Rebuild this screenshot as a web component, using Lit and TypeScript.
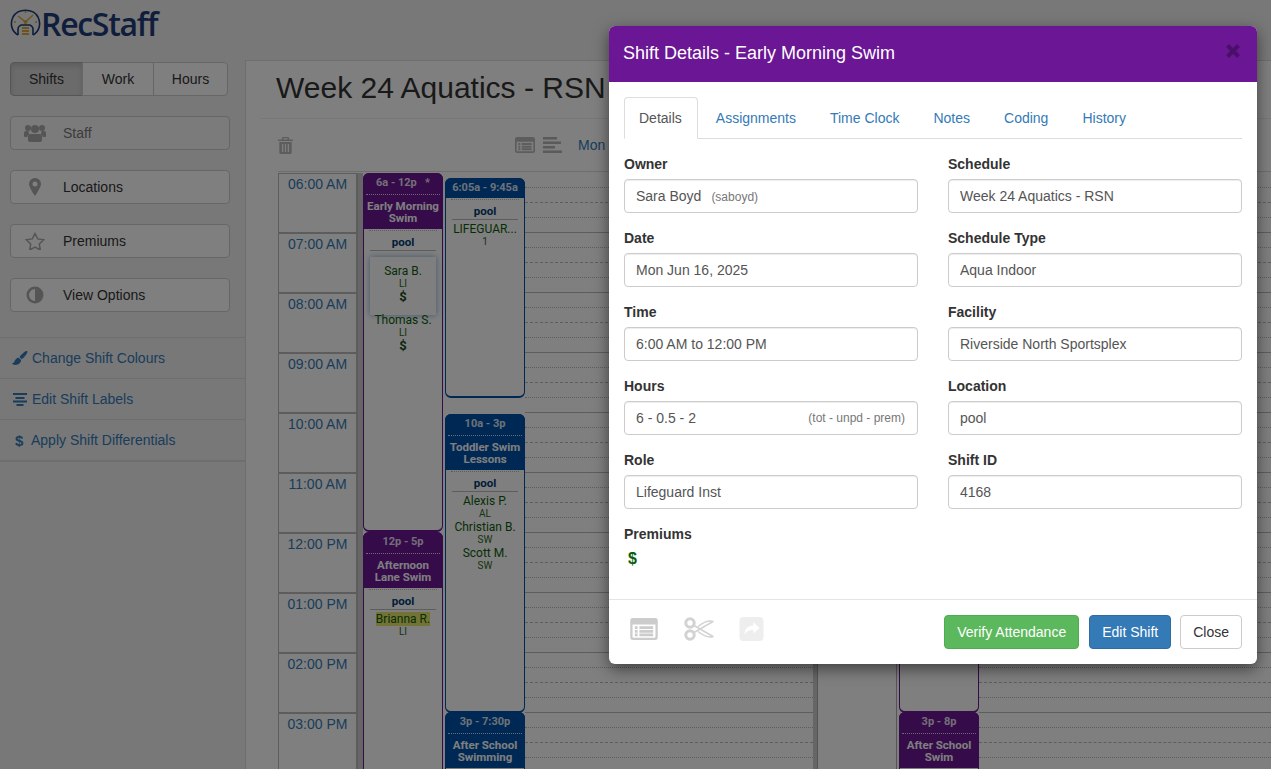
import { LitElement, html, svg, css } from 'lit';
import { customElement } from 'lit/decorators.js';

const PURPLE = '#6a1695';
const NAVY = '#0050a8';

interface Person {
  name: string;
  role: string;
  premium?: boolean;
  selected?: boolean;
  flagged?: boolean;
}

interface Shift {
  top: number;
  left: number;
  height: number;
  color: string;
  time: string;
  title?: string;
  star?: boolean;
  location?: string;
  people?: Person[];
}

const laneOne: Shift[] = [
  {
    top: 0, left: 0, height: 359, color: PURPLE, time: '6a - 12p', star: true, title: 'Early Morning Swim', location: 'pool',
    people: [
      { name: 'Sara B.', role: 'LI', premium: true, selected: true },
      { name: 'Thomas S.', role: 'LI', premium: true },
    ],
  },
  {
    top: 5, left: 82, height: 220, color: NAVY, time: '6:05a - 9:45a', location: 'pool',
    people: [{ name: 'LIFEGUAR...', role: '1' }],
  },
  {
    top: 241, left: 82, height: 299, color: NAVY, time: '10a - 3p', title: 'Toddler Swim Lessons', location: 'pool',
    people: [
      { name: 'Alexis P.', role: 'AL' },
      { name: 'Christian B.', role: 'SW' },
      { name: 'Scott M.', role: 'SW' },
    ],
  },
  {
    top: 359, left: 0, height: 300, color: PURPLE, time: '12p - 5p', title: 'Afternoon Lane Swim', location: 'pool',
    people: [{ name: 'Brianna R.', role: 'LI', flagged: true }],
  },
  { top: 539, left: 82, height: 120, color: NAVY, time: '3p - 7:30p', title: 'After School Swimming' },
];

const laneTwo: Shift[] = [
  { top: 240, left: 2, height: 300, color: PURPLE, time: '10a - 3p' },
  { top: 539, left: 2, height: 120, color: PURPLE, time: '3p - 8p', title: 'After School Swim' },
];

const hours = ['06:00 AM', '07:00 AM', '08:00 AM', '09:00 AM', '10:00 AM', '11:00 AM', '12:00 PM', '01:00 PM', '02:00 PM', '03:00 PM'];

const listAlt = svg`<path fill="currentColor" fill-rule="evenodd" d="M3 0h24a3 3 0 0 1 3 3v18a3 3 0 0 1-3 3H3a3 3 0 0 1-3-3V3a3 3 0 0 1 3-3zM2.500 7v13.500a1 1 0 0 0 1 1h23a1 1 0 0 0 1-1V7zM5 9h3v3H5zM10 9h15v3H10zM5 13h3v3H5zM10 13h15v3H10zM5 17h3v3H5zM10 17h15v3H10z"/>`;

@customElement('app-root')
export class AppRoot extends LitElement {
  static styles = css`
    :host {
      display: block;
      position: relative;
      height: 769px;
      overflow: hidden;
      background: #f1f1f1;
      font-family: 'Liberation Sans', Arial, sans-serif;
      font-size: 14px;
      color: #333;
    }

    a { color: #337ab7; text-decoration: none; }

    .logo {
      display: flex;
      align-items: center;
      height: 60px;
      padding: 0 0 14px 10px;
      box-sizing: border-box;
    }
    .logo svg { width: 31px; height: 30px; }
    .logo span {
      font-family: 'Open Sans', sans-serif;
      font-weight: 600;
      font-size: 32px;
      letter-spacing: -1.3px;
      color: #1f3d78;
    }

    .page { display: flex; height: 709px; }

    /* left column */
    .sidebar { width: 245px; flex: none; padding-top: 2px; box-sizing: border-box; }
    .seg { display: flex; width: 218px; margin-left: 10px; height: 34px; }
    .seg div {
      display: flex;
      align-items: center;
      justify-content: center;
      border: 1px solid #ccc;
      margin-left: -1px;
      background: #fff;
      box-sizing: border-box;
    }
    .seg .on { background: #d6d6d6; border-color: #adadad; box-shadow: inset 0 3px 5px rgba(0, 0, 0, 0.125); border-radius: 4px 0 0 4px; margin-left: 0; width: 73px; }
    .seg .work { width: 72px; }
    .seg .hrs { width: 75px; border-radius: 0 4px 4px 0; }

    .tools { display: flex; flex-direction: column; gap: 20px; margin: 20px 0 25px 10px; }
    .tool {
      display: flex;
      align-items: center;
      width: 220px;
      height: 34px;
      box-sizing: border-box;
      background: #fff;
      border: 1px solid #ccc;
      border-radius: 4px;
    }
    .tool.off { color: #777; background: #f7f7f7; }
    .tool svg { width: 22px; height: 18px; margin-left: 13px; margin-right: 17px; color: #aaa; }

    .links { border-top: 1px solid #ddd; border-bottom: 1px solid #ddd; }
    .links a {
      display: flex;
      align-items: center;
      height: 40px;
      padding-left: 12px;
      border-bottom: 1px solid #ddd;
    }
    .links svg { width: 16px; height: 14px; margin-right: 4px; }
    .links .usd { width: 15px; margin-left: 3px; font-weight: 700; font-size: 15px; margin-right: 1px; }

    /* main panel */
    .main {
      flex: 1;
      min-width: 0;
      background: #fff;
      border-top: 1px solid #ddd;
      border-left: 1px solid #ddd;
    }
    .title {
      margin: 0 0 0 15px;
      padding: 8px 0 11px 15px;
      height: 38px;
      border-bottom: 1px solid #eee;
      font-size: 30px;
      font-weight: 400;
      line-height: 38px;
      color: #333;
    }
    .bar {
      display: flex;
      align-items: center;
      height: 52px;
      margin-left: 32px;
      border-bottom: 1px solid #ddd;
      color: #bbb;
    }
    .bar .trash { width: 15px; height: 17px; }
    .bar .la { width: 20px; height: 16px; margin-left: 222px; color: #bbb; }
    .bar .tasks { width: 19px; height: 16px; margin-left: 8px; color: #b4b4b4; }
    .bar a { margin-left: 16px; }

    .cal { display: flex; margin: 1px 0 0 32px; }
    .times { width: 80px; flex: none; border-left: 1px solid #bbb; box-sizing: border-box; }
    .time {
      height: 60px;
      box-sizing: border-box;
      border: 1px solid #bbb;
      border-width: 1px 2px 1px 0;
      text-align: center;
      line-height: 20px;
      color: #337ab7;
    }
    .band { flex: none; width: 5px; background: #ccc; }
    .band.thin { width: 4px; }
    .lane { position: relative; flex: none; width: 162px; }
    .lane.two { width: 82px; }
    .blank { width: 80px; flex: none; box-sizing: border-box; border-left: 1px solid #aaa; border-right: 1px solid #aaa; }
    .lines { flex: none; width: 288px; }
    .lines.rest { flex: 1; width: auto; }
    .hour { height: 60px; box-sizing: border-box; }
    .hour i { display: block; height: 15px; box-sizing: border-box; border-bottom: 1px dotted #bbb; }
    .hour i:nth-child(2) { border-bottom-style: dashed; }
    .hour i:nth-child(4) { border-bottom: 1px solid #bbb; }

    .shift {
      position: absolute;
      width: 80px;
      box-sizing: border-box;
      background: #fff;
      border: 1px solid;
      border-bottom-width: 2px;
      border-radius: 6px;
      font-family: Roboto, 'Liberation Sans', sans-serif;
      font-size: 12px;
      text-align: center;
    }
    .head {
      margin: -1px -1px 0;
      border-radius: 6px 6px 0 0;
      color: #fff;
      font-size: 11.5px;
      font-weight: 700;
      line-height: 12px;
    }
    .head .when {
      height: 20px;
      line-height: 20px;
      margin: 0 3px;
      font-size: 11px;
      opacity: 0.85;
    }
    .head .what {
      margin: 1px 3px 0;
      border-top: 1px dotted rgba(255, 255, 255, 0.8);
      padding: 5px 0 5px;
    }
    .loc {
      margin: 1px 5px 0;
      border-top: 1px dotted #bbb;
      padding-top: 4px;
    }
    .loc b {
      display: block;
      font-size: 11.5px;
      line-height: 14px;
      padding-bottom: 1px;
      border-bottom: 1px solid #bbb;
      margin: 0 1px;
      color: #003a70;
    }
    .person { margin-top: 3px; line-height: 13px; color: #0b5d0b; }
    .person + .person { margin-top: 1px; }
    .person small { display: block; font-size: 10px; line-height: 12px; color: #2c6b1a; }
    .person .usd { display: block; font-size: 13px; line-height: 14px; color: #1a4a1a; font-weight: 700; }
    .person.sel {
      margin: 6px 6px 0;
      padding: 8px 0 11px;
      background: #fff;
      box-shadow: 0 0 6px rgba(51, 122, 183, 0.6);
    }
    .person.sel + .person { margin-top: -1px; }
    .person mark { background: #e6e66a; color: inherit; }

    /* dimmer and dialog */
    .dim { position: absolute; inset: 0; background: rgba(0, 0, 0, 0.5); }
    .modal {
      position: absolute;
      left: 609px;
      top: 26px;
      width: 648px;
      height: 638px;
      background: #fff;
      border-radius: 6px;
      box-shadow: 0 5px 15px rgba(0, 0, 0, 0.5);
    }
    .m-head {
      display: flex;
      align-items: center;
      justify-content: space-between;
      height: 56px;
      padding: 0 15px 2px 14px;
      box-sizing: border-box;
      background: #6a1695;
      border-radius: 6px 6px 0 0;
      color: #fff;
      font-size: 18px;
      font-weight: 500;
    }
    .m-head svg { width: 16px; height: 16px; color: rgba(0, 0, 0, 0.3); margin-right: 1px; margin-bottom: 4px; }

    .m-body { padding: 15px 15px 0; height: 517px; box-sizing: border-box; }
    .tabs { display: flex; height: 42px; border-bottom: 1px solid #ddd; box-sizing: border-box; margin-bottom: 15px; }
    .tabs a {
      height: 42px;
      box-sizing: border-box;
      padding: 10px 15px;
      line-height: 20px;
      border: 1px solid transparent;
      margin-right: 2px;
    }
    .tabs a.on {
      color: #555;
      border-color: #ddd #ddd #fff;
      border-radius: 4px 4px 0 0;
      background: #fff;
      padding-left: 14px;
    }

    .grid { display: grid; grid-template-columns: 294px 294px; column-gap: 30px; }
    .field { height: 74px; }
    .field label { display: block; height: 20px; line-height: 20px; font-weight: 700; margin-bottom: 5px; }
    .input {
      display: flex;
      align-items: center;
      justify-content: space-between;
      height: 34px;
      box-sizing: border-box;
      padding: 0 12px 0 11px;
      border: 1px solid #ccc;
      border-radius: 4px;
      color: #555;
      box-shadow: inset 0 1px 1px rgba(0, 0, 0, 0.075);
    }
    .input small { font-size: 12px; color: #777; }
    .input .user { margin-left: 10px; }
    .prem { color: #0b5d0b; font-weight: 700; font-size: 16px; margin: 5px 0 0 4px; line-height: 20px; }

    .m-foot {
      display: flex;
      align-items: center;
      height: 65px;
      padding: 0 15px 0 21px;
      box-sizing: border-box;
      border-top: 1px solid #e5e5e5;
    }
    .m-foot svg { color: #ccc; margin-bottom: 6px; }
    .m-foot .la { width: 28px; height: 22px; }
    .m-foot .cut { width: 30px; height: 24px; margin-left: 26px; color: #d2d2d2; }
    .m-foot .fwd { width: 25px; height: 24px; margin-left: 25px; color: #eee; }
    .btns { display: flex; margin-left: auto; }
    .btn {
      height: 34px;
      box-sizing: border-box;
      padding: 0 12px;
      line-height: 32px;
      border: 1px solid #ccc;
      border-radius: 4px;
      background: #fff;
      margin-left: 9px;
    }
    .btn.green { background: #5cb85c; border-color: #4cae4c; color: #fff; margin-left: 0; }
    .btn.blue { background: #337ab7; border-color: #2e6da4; color: #fff; margin-left: 10px; }
  `;

  private renderPerson(p: Person) {
    return html`
      <div class="person ${p.selected ? 'sel' : ''}">
        ${p.flagged ? html`<mark>${p.name}</mark>` : p.name}
        <small>${p.role}</small>
        ${p.premium ? html`<span class="usd">$</span>` : ''}
      </div>
    `;
  }

  private renderShift(s: Shift) {
    return html`
      <div class="shift" style="top:${s.top}px;left:${s.left}px;height:${s.height}px;border-color:${s.color}">
        <div class="head" style="background:${s.color}">
          <div class="when">${s.time}${s.star ? html`&nbsp;&nbsp;&nbsp;*` : ''}</div>
          ${s.title ? html`<div class="what">${s.title}</div>` : ''}
        </div>
        ${s.location
          ? html`<div class="loc"><b>${s.location}</b></div>`
          : ''}
        ${(s.people ?? []).map((p) => this.renderPerson(p))}
      </div>
    `;
  }

  private renderLines(rest = false) {
    return html`
      <div class="lines ${rest ? 'rest' : ''}">
        ${hours.map(() => html`<div class="hour"><i></i><i></i><i></i><i></i></div>`)}
      </div>
    `;
  }

  private renderField(label: string, value: unknown) {
    return html`
      <div class="field">
        <label>${label}</label>
        <div class="input">${value}</div>
      </div>
    `;
  }

  render() {
    return html`
      <div class="logo">
        <svg viewBox="0 0 31 30">
          <path d="M8 27 C1 23 0 15 3 9 C8 0 23 0 28 9 C31 15 30 23 23 27" fill="none" stroke="#1f3d78" stroke-width="1.600"/>
          <path d="M8 27 V21 C8 19 10 17 12 17 H19 C21 17 23 19 23 21 V27" fill="none" stroke="#1f3d78" stroke-width="1.600"/>
          <path d="M8 8 L15.500 14 L23 7 M15.500 3 V5 M4 14 H6 M25 14 H27" fill="none" stroke="#d9a93a" stroke-width="1.600"/>
          <circle cx="15.500" cy="14" r="2" fill="#d9a93a"/>
          <path d="M12 19 H19 V21 H12z M12 22 H19 V24 H12z M12 25 H19 V27 H12z" fill="#d9a93a"/>
        </svg>
        <span>RecStaff</span>
      </div>
      <div class="page">
        <div class="sidebar">
          <div class="seg">
            <div class="on">Shifts</div>
            <div class="work">Work</div>
            <div class="hrs">Hours</div>
          </div>
          <div class="tools">
            <div class="tool off">
              <svg viewBox="0 0 22 18"><g fill="currentColor"><circle cx="4" cy="4" r="3"/><circle cx="18" cy="4" r="3"/><circle cx="11" cy="5" r="4"/><path d="M0 9a2 2 0 0 1 2-2h2.500a5 5 0 0 0 1 3.500C4 11 3.500 12 3.500 13H1a1 1 0 0 1-1-1zM22 9a2 2 0 0 0-2-2h-2.500a5 5 0 0 1-1 3.500c1.500.5 2 1.500 2 2.500H21a1 1 0 0 0 1-1z"/><path d="M7 10h8a3 3 0 0 1 3 3v3a2 2 0 0 1-2 2H6a2 2 0 0 1-2-2v-3a3 3 0 0 1 3-3z"/></g></svg>
              Staff
            </div>
            <div class="tool">
              <svg viewBox="0 0 22 18"><path fill="currentColor" fill-rule="evenodd" d="M11 0a6 6 0 0 0-6 6c0 3.500 6 12 6 12s6-8.500 6-12a6 6 0 0 0-6-6zm0 3.500a2.500 2.500 0 1 1 0 5 2.500 2.500 0 0 1 0-5z"/></svg>
              Locations
            </div>
            <div class="tool">
              <svg viewBox="0 0 22 18"><path fill="none" stroke="currentColor" stroke-width="1.500" d="M11 1.500l2.700 5.400 6 .9-4.400 4.200 1 6-5.300-2.800-5.300 2.800 1-6L2.300 7.800l6-.9z"/></svg>
              Premiums
            </div>
            <div class="tool">
              <svg viewBox="0 0 22 18"><path fill="currentColor" fill-rule="evenodd" d="M11 0.500a8.500 8.500 0 1 1 0 17 8.500 8.500 0 0 1 0-17zM11 3a6 6 0 0 0 0 12z"/></svg>
              View Options
            </div>
          </div>
          <div class="links">
            <a>
              <svg viewBox="0 0 16 14"><path fill="currentColor" d="M14.500 0c.6 0 1.200.4 1 1-.6 2-3.500 5.700-5.700 7.300L7.500 6C9.300 3.700 13 0 14.500 0zM6.800 6.800l2.300 2.300C9 11.500 7 14 3.500 14 1.500 14 .5 13.200 0 12.300c1.200 0 2-.6 2.400-1.700.5-2 2.300-3.700 4.400-3.800z"/></svg>
              Change Shift Colours
            </a>
            <a>
              <svg viewBox="0 0 16 14"><path fill="currentColor" d="M1 1h14v2H1zM3.500 5h9v2h-9zM1 8.500h14v2H1zM4.500 12h7v2h-7z"/></svg>
              Edit Shift Labels
            </a>
            <a><span class="usd">$</span>Apply Shift Differentials</a>
          </div>
        </div>
        <div class="main">
          <h1 class="title">Week 24 Aquatics - RSN</h1>
          <div class="bar">
            <svg class="trash" viewBox="0 0 15 17"><path fill="currentColor" fill-rule="evenodd" d="M5 0h5a1 1 0 0 1 1 1v1.500h3.500a.5.5 0 0 1 .5.500v1H0V3a.5.500 0 0 1 .5-.5H4V1a1 1 0 0 1 1-1zm.5 1.300v1.200h4V1.300zM1.300 5h12.400v10.500a1.500 1.500 0 0 1-1.500 1.500H2.800a1.500 1.500 0 0 1-1.500-1.500zM4 7v8h1.300V7zm2.900 0v8h1.200V7zm2.800 0v8H11V7z"/></svg>
            <svg class="la" viewBox="0 0 30 24">${listAlt}</svg>
            <svg class="tasks" viewBox="0 0 19 16"><path fill="currentColor" d="M0 0h14v2.500H0zM0 4.500h18v2.500H0zM0 9h12v2.500H0zM0 13.500h19V16H0z"/></svg>
            <a>Mon</a>
          </div>
          <div class="cal">
            <div class="times">
              ${hours.map((h) => html`<div class="time">${h}</div>`)}
            </div>
            <div class="band"></div>
            <div class="lane">${laneOne.map((s) => this.renderShift(s))}</div>
            ${this.renderLines()}
            <div class="band thin"></div>
            <div class="blank"></div>
            <div class="lane two">${laneTwo.map((s) => this.renderShift(s))}</div>
            ${this.renderLines(true)}
          </div>
        </div>
      </div>

      <div class="dim"></div>

      <div class="modal">
        <div class="m-head">
          Shift Details - Early Morning Swim
          <svg viewBox="0 0 16 16"><path d="M2.500 2.500 L13.500 13.500 M13.500 2.500 L2.500 13.500" stroke="currentColor" stroke-width="4" fill="none"/></svg>
        </div>
        <div class="m-body">
          <div class="tabs">
            <a class="on">Details</a>
            <a>Assignments</a>
            <a>Time Clock</a>
            <a>Notes</a>
            <a>Coding</a>
            <a>History</a>
          </div>
          <div class="grid">
            ${this.renderField('Owner', html`<span>Sara Boyd<small class="user">(saboyd)</small></span>`)}
            ${this.renderField('Schedule', 'Week 24 Aquatics - RSN')}
            ${this.renderField('Date', 'Mon Jun 16, 2025')}
            ${this.renderField('Schedule Type', 'Aqua Indoor')}
            ${this.renderField('Time', '6:00 AM to 12:00 PM')}
            ${this.renderField('Facility', 'Riverside North Sportsplex')}
            ${this.renderField('Hours', html`<span>6 - 0.5 - 2</span><small>(tot - unpd - prem)</small>`)}
            ${this.renderField('Location', 'pool')}
            ${this.renderField('Role', 'Lifeguard Inst')}
            ${this.renderField('Shift ID', '4168')}
            <div class="field">
              <label>Premiums</label>
              <div class="prem">$</div>
            </div>
          </div>
        </div>
        <div class="m-foot">
          <svg class="la" viewBox="0 0 30 24">${listAlt}</svg>
          <svg class="cut" viewBox="0 0 30 24">
            <g fill="none" stroke="currentColor">
              <circle cx="6" cy="6" r="4.200" stroke-width="3"/>
              <circle cx="6" cy="18" r="4.200" stroke-width="3"/>
              <path stroke-width="1.500" stroke-linejoin="round" d="M10 8.500 L29 19.500 C25 21 21 20 14 14.500 M10 15.500 L29 4.500 C25 3 21 4 14 9.500"/>
            </g>
          </svg>
          <svg class="fwd" viewBox="0 0 24 24"><path fill="currentColor" fill-rule="evenodd" d="M4 0h16a4 4 0 0 1 4 4v16a4 4 0 0 1-4 4H4a4 4 0 0 1-4-4V4a4 4 0 0 1 4-4zm10 5v3.500C8 8.500 5 12 5 18c1.500-3.500 4.500-5 9-5v3.500L20 11z"/></svg>
          <div class="btns">
            <div class="btn green">Verify Attendance</div>
            <div class="btn blue">Edit Shift</div>
            <div class="btn">Close</div>
          </div>
        </div>
      </div>
    `;
  }
}
